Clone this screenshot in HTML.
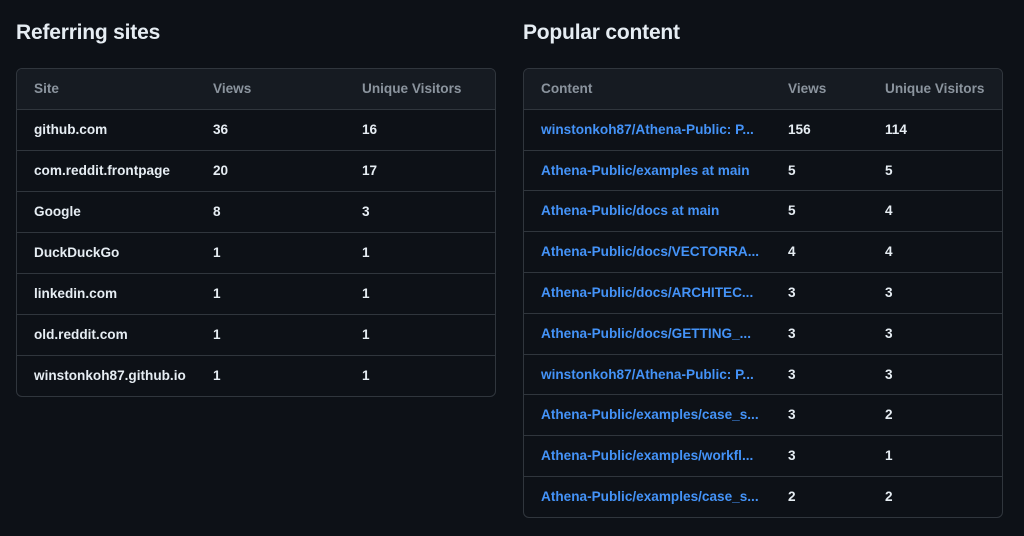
<!DOCTYPE html><html><head><style>
body{margin:0;background:#0d1117;width:1024px;height:536px;overflow:hidden;font-family:"Liberation Sans",sans-serif;color:#e6edf3}
h2{position:absolute;top:21px;margin:0;font-size:21px;font-weight:600;color:#e6edf3;letter-spacing:-0.2px}
.t{position:absolute;top:68px;border:1px solid #30363d;border-radius:6px;overflow:hidden;width:478px}
.r{height:40px;border-top:1px solid #30363d;position:relative;font-size:13.6px;font-weight:bold}
.b .r{height:39.8px}
.r:first-child{border-top:none;background:#161b22;color:#8b949e}
.r span{position:absolute;top:12px;white-space:nowrap}
.b span:first-child{color:#4493f8}
</style></head><body>
<h2 style="left:16px">Referring sites</h2>
<h2 style="left:523px">Popular content</h2>
<div class="t" style="left:16px">
<div class="r"><span style="left:17px">Site</span><span style="left:196px">Views</span><span style="left:345px">Unique Visitors</span></div>
<div class="r"><span style="left:17px">github.com</span><span style="left:196px">36</span><span style="left:345px">16</span></div>
<div class="r"><span style="left:17px">com.reddit.frontpage</span><span style="left:196px">20</span><span style="left:345px">17</span></div>
<div class="r"><span style="left:17px">Google</span><span style="left:196px">8</span><span style="left:345px">3</span></div>
<div class="r"><span style="left:17px">DuckDuckGo</span><span style="left:196px">1</span><span style="left:345px">1</span></div>
<div class="r"><span style="left:17px">linkedin.com</span><span style="left:196px">1</span><span style="left:345px">1</span></div>
<div class="r"><span style="left:17px">old.reddit.com</span><span style="left:196px">1</span><span style="left:345px">1</span></div>
<div class="r"><span style="left:17px">winstonkoh87.github.io</span><span style="left:196px">1</span><span style="left:345px">1</span></div>
</div>
<div class="t b" style="left:523px">
<div class="r"><span style="left:17px;color:#8b949e">Content</span><span style="left:264px">Views</span><span style="left:361px">Unique Visitors</span></div>
<div class="r"><span style="left:17px">winstonkoh87/Athena-Public: P...</span><span style="left:264px">156</span><span style="left:361px">114</span></div>
<div class="r"><span style="left:17px">Athena-Public/examples at main</span><span style="left:264px">5</span><span style="left:361px">5</span></div>
<div class="r"><span style="left:17px">Athena-Public/docs at main</span><span style="left:264px">5</span><span style="left:361px">4</span></div>
<div class="r"><span style="left:17px">Athena-Public/docs/VECTORRA...</span><span style="left:264px">4</span><span style="left:361px">4</span></div>
<div class="r"><span style="left:17px">Athena-Public/docs/ARCHITEC...</span><span style="left:264px">3</span><span style="left:361px">3</span></div>
<div class="r"><span style="left:17px">Athena-Public/docs/GETTING_...</span><span style="left:264px">3</span><span style="left:361px">3</span></div>
<div class="r"><span style="left:17px">winstonkoh87/Athena-Public: P...</span><span style="left:264px">3</span><span style="left:361px">3</span></div>
<div class="r"><span style="left:17px">Athena-Public/examples/case_s...</span><span style="left:264px">3</span><span style="left:361px">2</span></div>
<div class="r"><span style="left:17px">Athena-Public/examples/workfl...</span><span style="left:264px">3</span><span style="left:361px">1</span></div>
<div class="r"><span style="left:17px">Athena-Public/examples/case_s...</span><span style="left:264px">2</span><span style="left:361px">2</span></div>
</div>
</body></html>
